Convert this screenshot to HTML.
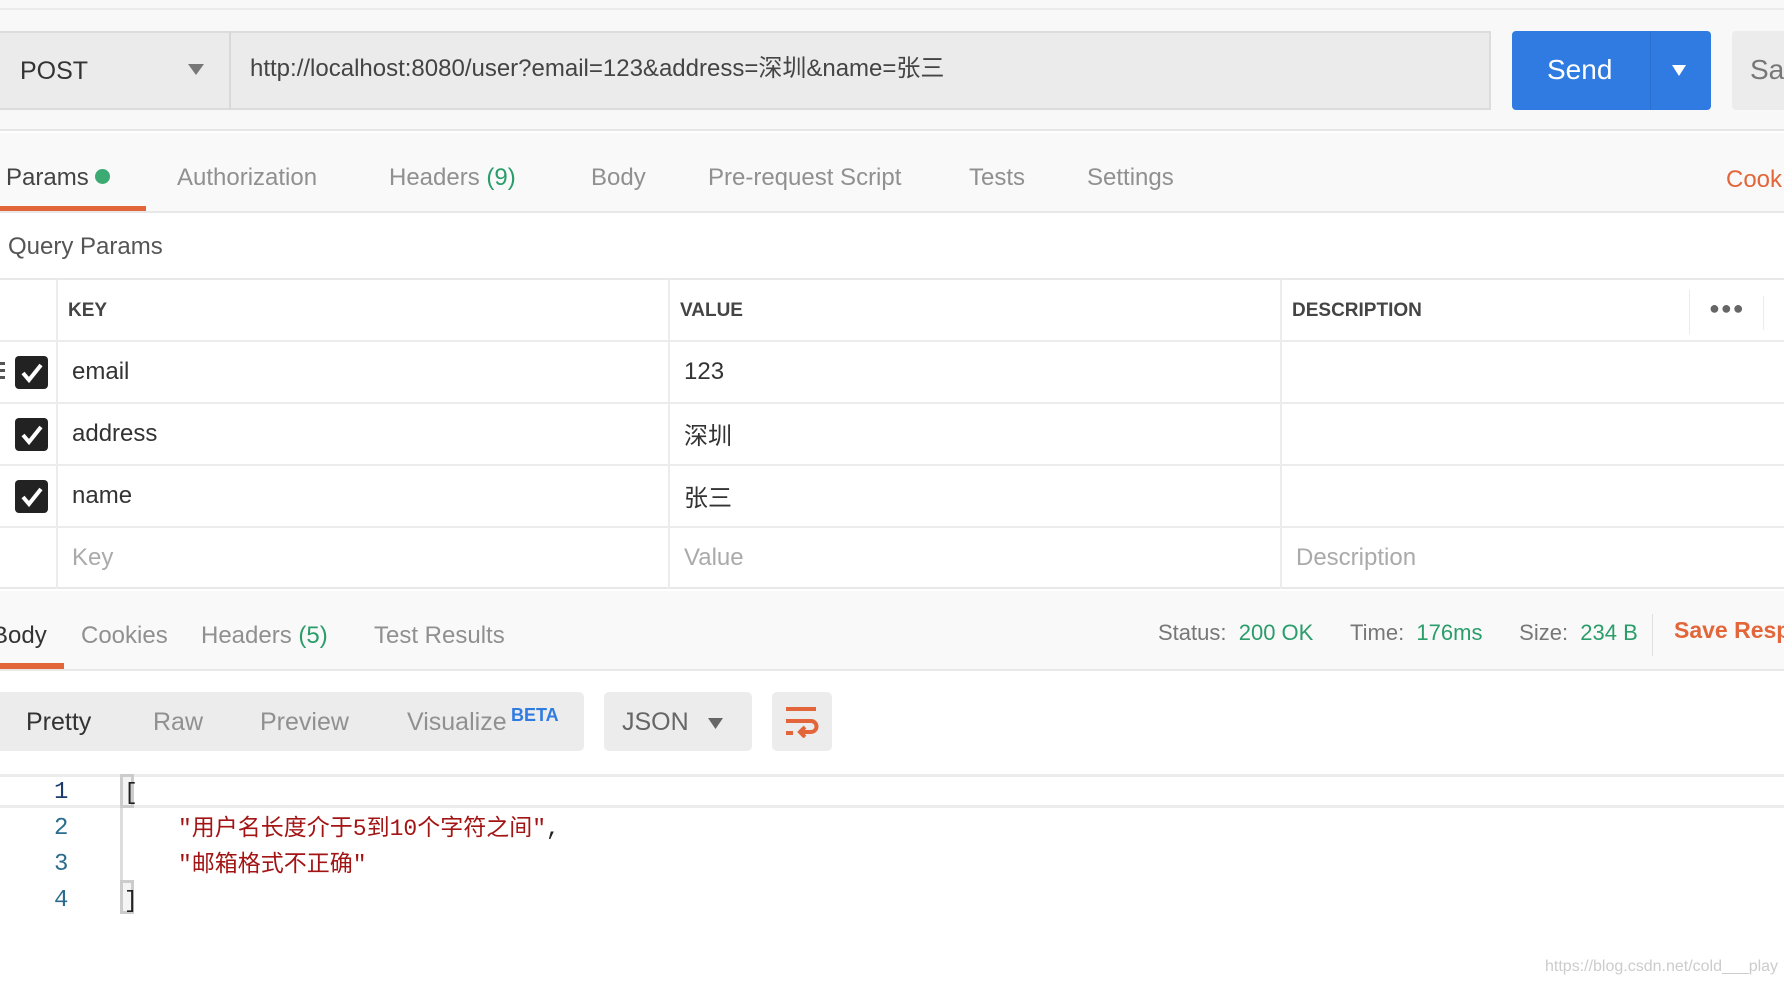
<!DOCTYPE html>
<html><head><meta charset="utf-8"><style>
*{margin:0;padding:0;box-sizing:border-box}
body{width:1784px;height:986px;overflow:hidden;background:#fff;font-family:"Liberation Sans","Noto Sans CJK SC",sans-serif;position:relative;color:#333}
.a{position:absolute;white-space:nowrap;line-height:1.15}
.g{color:#2a9d6a}
.gr{color:#909090}
</style></head><body>
<div class="a" style="left:0;top:0;width:1784px;height:131px;background:#f8f8f8;border-bottom:2px solid #e6e6e6"></div>
<div class="a" style="left:0;top:8px;width:1784px;height:2px;background:#ececec"></div>
<div class="a" style="left:0;top:31px;width:1491px;height:79px;background:#ebebeb;border:2px solid #dcdcdc;border-left:none"></div>
<div class="a" style="left:229px;top:31px;width:2px;height:79px;background:#d8d8d8"></div>
<div class="a" style="left:20px;top:57px;font-size:25px;color:#333">POST</div>
<svg class="a" style="left:188px;top:64px" width="16" height="12"><path d="M0 0H16L8 11Z" fill="#777"/></svg>
<div class="a" style="left:250px;top:55px;font-size:24px;color:#444">http://localhost:8080/user?email=123&amp;address=深圳&amp;name=张三</div>
<div class="a" style="left:1512px;top:31px;width:199px;height:79px;background:#2f7be2;border-radius:4px"></div>
<div class="a" style="left:1650px;top:31px;width:1px;height:79px;background:#2a6fcc"></div>
<div class="a" style="left:1547px;top:54px;font-size:28px;color:#fff">Send</div>
<svg class="a" style="left:1672px;top:65px" width="14" height="11"><path d="M0 0H14L7 11Z" fill="#fff"/></svg>
<div class="a" style="left:1732px;top:31px;width:60px;height:79px;background:#ececec;border-radius:4px"></div>
<div class="a" style="left:1750px;top:54px;font-size:28px;color:#777">Sav</div>
<div class="a" style="left:0;top:133px;width:1784px;height:80px;background:#f9f9f9;border-bottom:2px solid #e8e8e8"></div>
<div class="a" style="left:6px;top:164px;font-size:24px;color:#444">Params <span style="display:inline-block;width:15px;height:15px;border-radius:50%;background:#3cab73;vertical-align:1px"></span></div>
<div class="a gr" style="left:177px;top:164px;font-size:24px">Authorization</div>
<div class="a gr" style="left:389px;top:164px;font-size:24px">Headers <span class="g">(9)</span></div>
<div class="a gr" style="left:591px;top:164px;font-size:24px">Body</div>
<div class="a gr" style="left:708px;top:164px;font-size:24px">Pre-request Script</div>
<div class="a gr" style="left:969px;top:164px;font-size:24px">Tests</div>
<div class="a gr" style="left:1087px;top:164px;font-size:24px">Settings</div>
<div class="a" style="left:1726px;top:166px;font-size:24px;color:#e2663a">Cook</div>
<div class="a" style="left:0;top:206px;width:146px;height:5px;background:#e2663a"></div>
<div class="a" style="left:8px;top:233px;font-size:24px;color:#555">Query Params</div>
<div class="a" style="left:0;top:278px;width:1784px;height:311px;border-top:2px solid #e8e8e8;border-bottom:2px solid #e8e8e8"></div>
<div class="a" style="left:0;top:340px;width:1784px;height:2px;background:#ececec"></div>
<div class="a" style="left:0;top:402px;width:1784px;height:2px;background:#ececec"></div>
<div class="a" style="left:0;top:464px;width:1784px;height:2px;background:#ececec"></div>
<div class="a" style="left:0;top:526px;width:1784px;height:2px;background:#ececec"></div>
<div class="a" style="left:56px;top:279px;width:2px;height:310px;background:#ececec"></div>
<div class="a" style="left:668px;top:279px;width:2px;height:310px;background:#ececec"></div>
<div class="a" style="left:1280px;top:279px;width:2px;height:310px;background:#ececec"></div>
<div class="a" style="left:1689px;top:290px;width:1px;height:44px;background:#ececec"></div>
<div class="a" style="left:1763px;top:296px;width:1px;height:34px;background:#ececec"></div>
<div class="a" style="left:68px;top:300px;font-size:19px;font-weight:bold;color:#444">KEY</div>
<div class="a" style="left:680px;top:300px;font-size:19px;font-weight:bold;color:#444">VALUE</div>
<div class="a" style="left:1292px;top:300px;font-size:19px;font-weight:bold;color:#444">DESCRIPTION</div>
<div class="a" style="left:1709px;top:298px;font-size:18px;color:#666;letter-spacing:1px">●●●</div>
<div class="a" style="left:0;top:362px;width:5px;height:20px;background:repeating-linear-gradient(#555 0 3px,transparent 3px 7px)"></div>
<svg class="a" style="left:15px;top:356px" width="33" height="33"><rect width="33" height="33" rx="4" fill="#222"/><path d="M8 17L14 24L26 9" stroke="#fff" stroke-width="4" fill="none"/></svg>
<svg class="a" style="left:15px;top:418px" width="33" height="33"><rect width="33" height="33" rx="4" fill="#222"/><path d="M8 17L14 24L26 9" stroke="#fff" stroke-width="4" fill="none"/></svg>
<svg class="a" style="left:15px;top:480px" width="33" height="33"><rect width="33" height="33" rx="4" fill="#222"/><path d="M8 17L14 24L26 9" stroke="#fff" stroke-width="4" fill="none"/></svg>
<div class="a" style="left:72px;top:358px;font-size:24px">email</div>
<div class="a" style="left:684px;top:358px;font-size:24px">123</div>
<div class="a" style="left:72px;top:420px;font-size:24px">address</div>
<div class="a" style="left:684px;top:418px;font-size:24px;line-height:32px;font-family:'Noto Sans CJK SC',sans-serif">深圳</div>
<div class="a" style="left:72px;top:482px;font-size:24px">name</div>
<div class="a" style="left:684px;top:480px;font-size:24px;line-height:32px;font-family:'Noto Sans CJK SC',sans-serif">张三</div>
<div class="a" style="left:72px;top:544px;font-size:24px;color:#aaa">Key</div>
<div class="a" style="left:684px;top:544px;font-size:24px;color:#aaa">Value</div>
<div class="a" style="left:1296px;top:544px;font-size:24px;color:#aaa">Description</div>
<div class="a" style="left:0;top:591px;width:1784px;height:80px;background:#f9f9f9;border-bottom:2px solid #e8e8e8"></div>
<div class="a" style="left:-8px;top:622px;font-size:24px;color:#333">Body</div>
<div class="a gr" style="left:81px;top:622px;font-size:24px">Cookies</div>
<div class="a gr" style="left:201px;top:622px;font-size:24px">Headers <span class="g">(5)</span></div>
<div class="a gr" style="left:374px;top:622px;font-size:24px">Test Results</div>
<div class="a" style="left:0;top:663px;width:64px;height:6px;background:#e2663a"></div>
<div class="a" style="left:1158px;top:620px;font-size:22px;color:#777">Status:&nbsp; <span class="g">200 OK</span>&nbsp;&nbsp;&nbsp;&nbsp;&nbsp;&nbsp;Time:&nbsp; <span class="g">176ms</span>&nbsp;&nbsp;&nbsp;&nbsp;&nbsp;&nbsp;Size:&nbsp; <span class="g">234 B</span></div>
<div class="a" style="left:1652px;top:614px;width:1px;height:42px;background:#e0e0e0"></div>
<div class="a" style="left:1674px;top:617px;font-size:23px;font-weight:bold;color:#e2663a">Save Resp</div>
<div class="a" style="left:0;top:692px;width:584px;height:59px;background:#ececec;border-radius:0 5px 5px 0"></div>
<div class="a" style="left:26px;top:708px;font-size:25px;color:#333">Pretty</div>
<div class="a gr" style="left:153px;top:708px;font-size:25px">Raw</div>
<div class="a gr" style="left:260px;top:708px;font-size:25px">Preview</div>
<div class="a gr" style="left:407px;top:708px;font-size:25px">Visualize</div>
<div class="a" style="left:511px;top:705px;font-size:18px;font-weight:bold;color:#2f7be2">BETA</div>
<div class="a" style="left:604px;top:692px;width:148px;height:59px;background:#ececec;border-radius:5px"></div>
<div class="a" style="left:622px;top:708px;font-size:25px;color:#666">JSON</div>
<svg class="a" style="left:708px;top:718px" width="15" height="11"><path d="M0 0H15L7.5 11Z" fill="#666"/></svg>
<div class="a" style="left:772px;top:692px;width:60px;height:59px;background:#ececec;border-radius:5px"></div>
<svg class="a" style="left:785px;top:706px" width="34" height="32"><g stroke="#e2663a" stroke-width="4" fill="none"><path d="M1 3H31"/><path d="M1 15H26a5 5 0 0 1 0 11H16"/><path d="M1 27H8"/><path d="M20 21L15 26L20 31"/></g></svg>
<div class="a" style="left:0;top:774px;width:1784px;height:34px;border-top:3px solid #ececec;border-bottom:3px solid #ececec"></div>
<div class="a" style="left:120px;top:774px;width:14px;height:140px;border-left:3px solid #ddd"></div>
<div class="a" style="left:120px;top:774px;width:14px;height:34px;border:3px solid #ccc;background:#f4f4f4"></div>
<div class="a" style="left:120px;top:880px;width:14px;height:34px;border:3px solid #ccc;background:#f4f4f4"></div>
<div class="a" style="left:54px;top:775px;font-size:24px;line-height:36px;color:#1c3a6e;font-family:'Liberation Mono','Noto Sans CJK SC',monospace"><div>1</div><div style="color:#2a6c8f">2</div><div style="color:#2a6c8f">3</div><div style="color:#2a6c8f">4</div></div>
<div class="a" style="left:124px;top:775px;font-size:23px;line-height:36px;font-family:'Liberation Mono','Noto Sans CJK SC',monospace;color:#222"><div>[</div><div style="padding-left:54px"><span style="color:#a31515">"用户名长度介于5到10个字符之间"</span>,</div><div style="padding-left:54px"><span style="color:#a31515">"邮箱格式不正确"</span></div><div>]</div></div>
<div class="a" style="left:1545px;top:958px;font-size:16px;color:#ccc">https://blog.csdn.net/cold___play</div>
</body></html>
